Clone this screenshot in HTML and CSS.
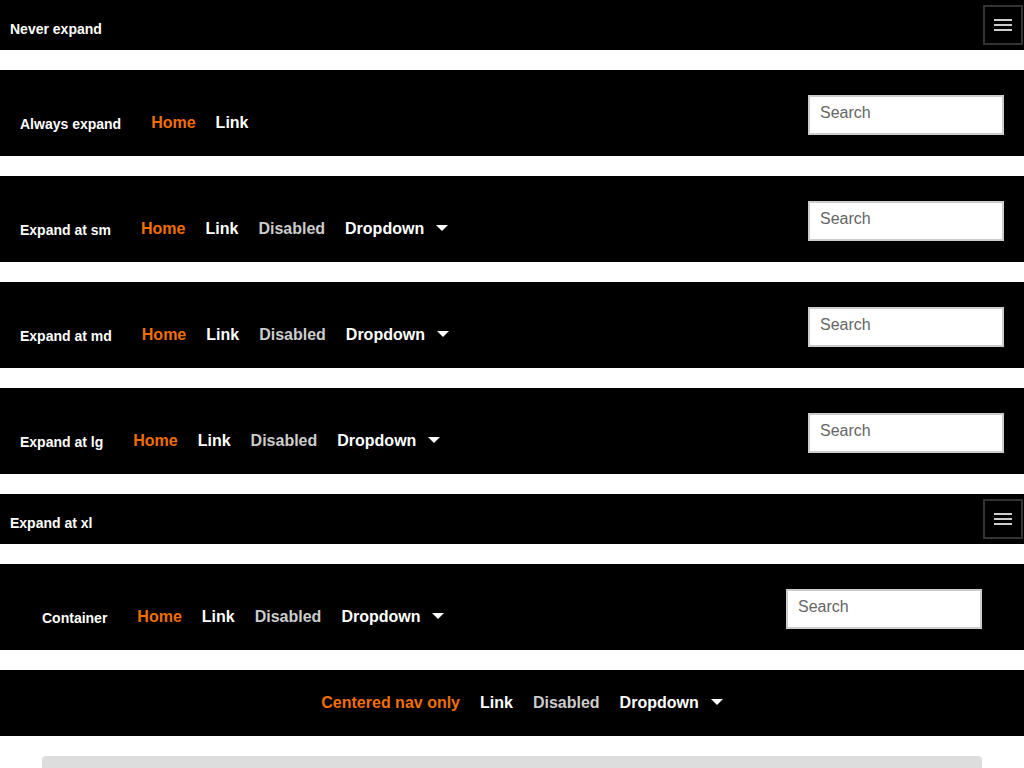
FILE: index.html
```html
<!DOCTYPE html>
<html lang="en">
<head>
<meta charset="utf-8">
<title>Navbars</title>
<link rel="stylesheet" href="styles.css">
</head>
<body>
<nav class="navbar collapsed">
  <a class="brand" href="#">Never expand</a>
  <button class="toggler" aria-label="Toggle navigation"><span class="bar"></span><span class="bar"></span><span class="bar"></span></button>
</nav>

<nav class="navbar expanded">
  <div class="group">
    <a class="brand" href="#">Always expand</a>
    <ul class="nav">
      <li><a class="link active" href="#">Home</a></li>
      <li><a class="link" href="#">Link</a></li>
    </ul>
  </div>
  <input class="search" type="text" placeholder="Search">
</nav>

<nav class="navbar expanded">
  <div class="group">
    <a class="brand" href="#">Expand at sm</a>
    <ul class="nav">
      <li><a class="link active" href="#">Home</a></li>
      <li><a class="link" href="#">Link</a></li>
      <li><a class="link disabled" href="#">Disabled</a></li>
      <li><a class="link dropdown" href="#">Dropdown<span class="caret"></span></a></li>
    </ul>
  </div>
  <input class="search" type="text" placeholder="Search">
</nav>

<nav class="navbar expanded">
  <div class="group">
    <a class="brand" href="#">Expand at md</a>
    <ul class="nav">
      <li><a class="link active" href="#">Home</a></li>
      <li><a class="link" href="#">Link</a></li>
      <li><a class="link disabled" href="#">Disabled</a></li>
      <li><a class="link dropdown" href="#">Dropdown<span class="caret"></span></a></li>
    </ul>
  </div>
  <input class="search" type="text" placeholder="Search">
</nav>

<nav class="navbar expanded">
  <div class="group">
    <a class="brand" href="#">Expand at lg</a>
    <ul class="nav">
      <li><a class="link active" href="#">Home</a></li>
      <li><a class="link" href="#">Link</a></li>
      <li><a class="link disabled" href="#">Disabled</a></li>
      <li><a class="link dropdown" href="#">Dropdown<span class="caret"></span></a></li>
    </ul>
  </div>
  <input class="search" type="text" placeholder="Search">
</nav>

<nav class="navbar collapsed">
  <a class="brand" href="#">Expand at xl</a>
  <button class="toggler" aria-label="Toggle navigation"><span class="bar"></span><span class="bar"></span><span class="bar"></span></button>
</nav>

<nav class="navbar expanded">
  <div class="container">
    <div class="group">
      <a class="brand" href="#">Container</a>
      <ul class="nav">
        <li><a class="link active" href="#">Home</a></li>
        <li><a class="link" href="#">Link</a></li>
        <li><a class="link disabled" href="#">Disabled</a></li>
        <li><a class="link dropdown" href="#">Dropdown<span class="caret"></span></a></li>
      </ul>
    </div>
    <input class="search" type="text" placeholder="Search">
  </div>
</nav>

<nav class="navbar centered">
  <ul class="nav">
    <li><a class="link active" href="#">Centered nav only</a></li>
    <li><a class="link" href="#">Link</a></li>
    <li><a class="link disabled" href="#">Disabled</a></li>
    <li><a class="link dropdown" href="#">Dropdown<span class="caret"></span></a></li>
  </ul>
</nav>

<main class="main">
  <div class="jumbotron"></div>
</main>
</body>
</html>
```

FILE: styles.css
```css
html, body {
  margin: 0;
  padding: 0;
  background: #fff;
  font-family: "Liberation Sans", Arial, sans-serif;
}

.navbar {
  display: flex;
  background: #000;
  margin-bottom: 20px;
  box-sizing: border-box;
}

.brand {
  color: #fff;
  font-size: 14px;
  font-weight: 700;
  line-height: 24px;
  text-decoration: none;
  white-space: nowrap;
}

/* collapsed navbars */
.collapsed {
  height: 50px;
  padding: 5px 1px 5px 10px;
  align-items: flex-start;
  justify-content: space-between;
}

.collapsed .brand {
  margin-top: 12px;
}

.toggler {
  width: 40px;
  height: 40px;
  box-sizing: border-box;
  border: 2px solid #333;
  background: transparent;
  padding: 0;
  display: flex;
  flex-direction: column;
  align-items: center;
  justify-content: center;
  gap: 3px;
}

.toggler .bar {
  display: block;
  width: 18px;
  height: 2px;
  background: #ccc;
}

/* expanded navbars */
.expanded {
  height: 86px;
  padding: 25px 20px 21px;
  align-items: flex-start;
}

.container {
  width: 940px;
  margin: 0 auto;
  display: flex;
  align-items: flex-start;
}

.group {
  display: flex;
  align-items: baseline;
  margin-top: 16px;
}

.group .brand {
  margin-right: 20px;
  position: relative;
  top: 1px;
}

.nav {
  list-style: none;
  margin: 0;
  padding: 0;
  display: flex;
  align-items: baseline;
}

.link {
  display: block;
  padding: 0 10px;
  color: #fff;
  font-size: 16px;
  font-weight: 700;
  line-height: 24px;
  text-decoration: none;
  white-space: nowrap;
}

.link.active {
  color: #f16e00;
}

.link.disabled {
  color: #ccc;
}

.caret {
  display: inline-block;
  width: 0;
  height: 0;
  margin-left: 12px;
  border-top: 6px solid #fff;
  border-left: 6px solid transparent;
  border-right: 6px solid transparent;
  vertical-align: 3px;
}

.search {
  margin-left: auto;
  width: 196px;
  height: 40px;
  box-sizing: border-box;
  border: 2px solid #ccc;
  background: #fff;
  padding: 0 10px 4px;
  font-family: "Liberation Sans", Arial, sans-serif;
  font-size: 16px;
  color: #000;
  outline: none;
}

.search::placeholder {
  color: #666;
}

/* centered navbar */
.centered {
  height: 66px;
  padding: 21px 0 21px 20px;
  justify-content: center;
}

/* main */
.main {
  width: 940px;
  margin: 0 auto;
}

.jumbotron {
  height: 240px;
  background: #ddd;
  border-radius: 4px;
}
```
